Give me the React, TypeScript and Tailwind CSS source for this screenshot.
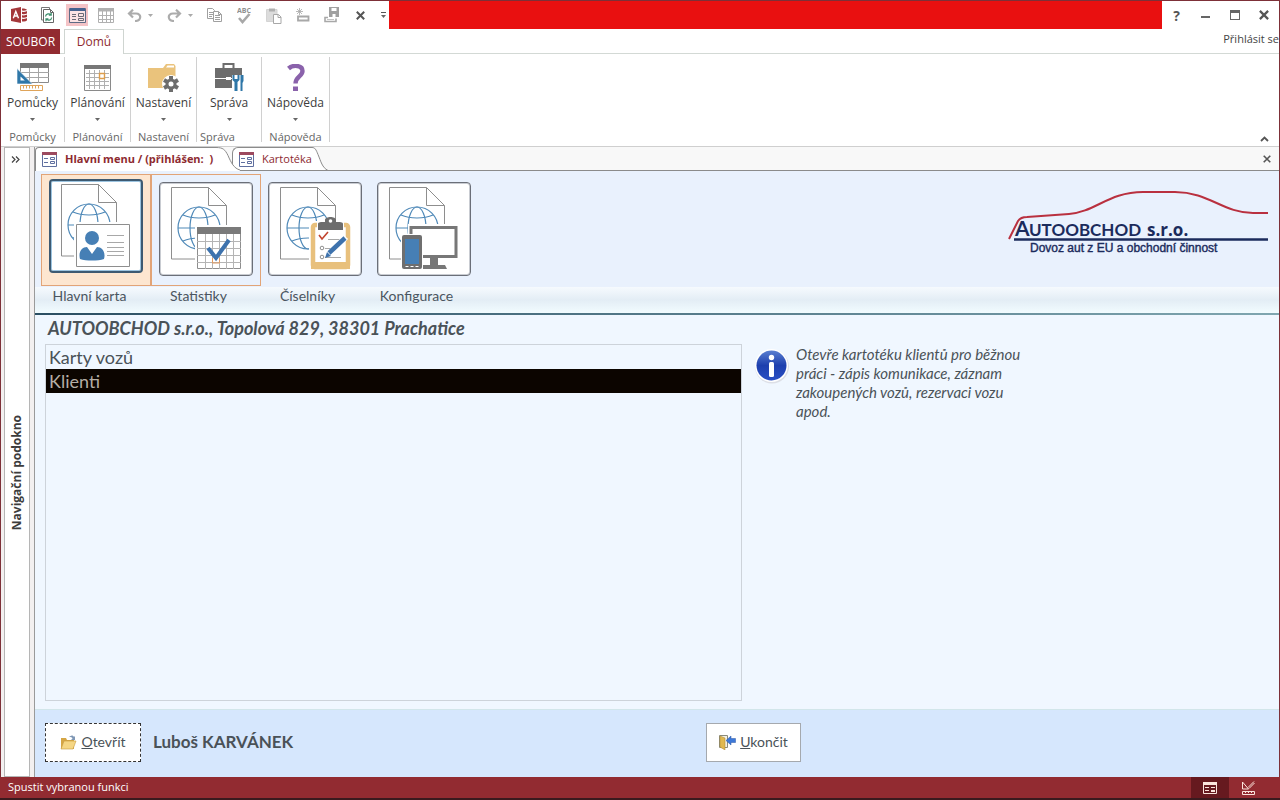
import React from "react";

const uiFont = "font-['Open_Sans','Noto_Sans',sans-serif]";
const formFont = "font-['Lato','Liberation_Sans',sans-serif]";

interface QuickAction {
  name: string;
  width: string;
  icon: React.ReactNode;
  active?: boolean;
}

const AccessLogo = () => (
  <svg width="18" height="18" viewBox="0 0 18 18">
    <path d="M1 3 11 1v16L1 15z" fill="#a4373a" />
    <path d="M12 2.500c3 0 5 .6 5 1.500v10c0 .9-2 1.600-5 1.600z" fill="#a4373a" />
    <path d="M12 5.200c2.500.3 4 0 5-.6M12 8.700c2.500.3 4 0 5-.6M12 12.200c2.500.3 4 0 5-.6" stroke="#fff" strokeWidth="1.200" fill="none" />
    <path d="m3.300 12.300 2.500-6.800 2.700 6.800M4.200 10h3.500" stroke="#fff" strokeWidth="1.400" fill="none" />
  </svg>
);

const RefreshPageIcon = () => (
  <svg width="15" height="18" viewBox="0 0 15 18" fill="none">
    <path d="M3 14H1.500V1.500h8V3" stroke="#777" />
    <path d="M3.500 3.500h7l3 3v10h-10z" stroke="#666" fill="#fff" />
    <path d="M10.500 3.500v3h3" stroke="#666" />
    <path d="M5.500 10.500c.4-3 4-3.500 5.500-1.500M11.200 6.800V9.200H8.800M11.700 11.500c-.4 3-4 3.500-5.500 1.500M6 15.200v-2.400h2.400" stroke="#3c8f6d" strokeWidth="1.200" />
  </svg>
);

const FormIcon = () => (
  <svg width="17" height="15" viewBox="0 0 17 15" fill="none">
    <path d="M.5.500h16v14H.5z" fill="#fbe3e4" stroke="#5d6b85" />
    <path d="M1 0h15v3H1z" fill="#46628f" />
    <path d="M3 6.500h4M3 8.500h4M3 11.500h4" stroke="#6b6b76" />
    <path d="M9.500 5.500h5v3h-5zM9.500 10.500h5v2h-5z" stroke="#6b6b76" />
  </svg>
);

const GridIcon = () => (
  <svg width="16" height="15" viewBox="0 0 16 15" fill="none" stroke="#b0b0b0">
    <path d="M0 0h16v3.500H0z" fill="#b0b0b0" stroke="none" />
    <path d="M.5 1v13.500h15V1M4.500 3v11M8.500 3v11M12.500 3v11M0 7.500h16M0 11.500h16" />
  </svg>
);

const UndoIcon = () => (
  <svg width="15" height="13" viewBox="0 0 15 13" fill="none" stroke="#acacac" strokeWidth="2.200">
    <path d="M2 4.500h7c6 0 5.500 7.500-1 7.500M6 .700 2 4.500l4 4" />
  </svg>
);

const RedoIcon = () => (
  <svg width="15" height="13" viewBox="0 0 15 13" fill="none" stroke="#acacac" strokeWidth="2.200">
    <path d="M13 4.500H6C0 4.500.5 12 7 12M9 .700l4 3.800-4 4" />
  </svg>
);

const Caret = ({ color = "#666" }: { color?: string }) => (
  <svg width="5" height="3" viewBox="0 0 5 3">
    <path d="M0 0h5L2.500 3z" fill={color} />
  </svg>
);

const CopyIcon = () => (
  <svg width="15" height="14" viewBox="0 0 15 14" fill="none" stroke="#a0a0a0">
    <path d="M.5.500h5l2 2v8h-7zM2 4.500h4M2 6.500h4M2 8.500h3" />
    <path d="M6.500 3.500h5l3 3v7h-8z" fill="#fff" />
    <path d="M8 7.500h5M8 9.500h5M8 11.500h5M11.500 3.500v3h3" />
  </svg>
);

const SpellingIcon = () => (
  <svg width="14" height="17" viewBox="0 0 14 17" fill="none">
    <text x="7" y="6" textAnchor="middle" fontSize="7" fontWeight="700" fill="#909090" fontFamily="Open Sans">
      ABC
    </text>
    <path d="m2 11 3.500 4 7-8" stroke="#a8a8a8" strokeWidth="2.600" />
  </svg>
);

const PasteIcon = () => (
  <svg width="16" height="17" viewBox="0 0 16 17" fill="none">
    <path d="M.5 2.500H11v12H.5z" fill="#dcdcdc" stroke="#d4d4d4" />
    <path d="M3 1.500h6v3H3z" fill="#b0b0b0" />
    <path d="M7.500 7.500h5l2.500 2.500v6.500H7.500z" fill="#fff" stroke="#a8a8a8" />
    <path d="M12 7.500v3h3" stroke="#a8a8a8" />
  </svg>
);

const NewItemIcon = () => (
  <svg width="15" height="14" viewBox="0 0 15 14" fill="none" stroke="#a8a8a8">
    <path d="M4.500 0v7M1 3.500h7M2 1l5 5M7 1 2 6" strokeWidth=".8" />
    <path d="M3 8.500h10.500v4H3z" strokeWidth="1.800" />
  </svg>
);

const SaveItemIcon = () => (
  <svg width="16" height="16" viewBox="0 0 16 16" fill="none">
    <path d="M5 0h10v10H5z" fill="#a0a0a0" />
    <path d="M7.500 1h5v3h-5zM8.500 7h3v3h-3z" fill="#fff" />
    <path d="M4 10.500H1v4h11v-3" stroke="#a8a8a8" strokeWidth="1.600" />
    <path d="M3 12.500h7" stroke="#c4c4c4" />
  </svg>
);

const CrossIcon = ({ size = 9, color = "#555", weight = 2 }: { size?: number; color?: string; weight?: number }) => (
  <svg width={size} height={size} viewBox="0 0 9 9">
    <path d="m.8.800 7.400 7.400M8.200.800.8 8.200" stroke={color} strokeWidth={weight} />
  </svg>
);

const quickActions: QuickAction[] = [
  { name: "Access", width: "w-[29px]", icon: <AccessLogo /> },
  { name: "Obnovit", width: "w-[29px]", icon: <RefreshPageIcon /> },
  { name: "Formulář", width: "w-[22px] mx-1", icon: <FormIcon />, active: true },
  { name: "Datový list", width: "w-[28px]", icon: <GridIcon /> },
  { name: "Zpět", width: "w-[40px] gap-1.5", icon: <><UndoIcon /><Caret color="#aaa" /></> },
  { name: "Znovu", width: "w-[40px] gap-1.5", icon: <><RedoIcon /><Caret color="#aaa" /></> },
  { name: "Kopírovat", width: "w-[29px]", icon: <CopyIcon /> },
  { name: "Pravopis", width: "w-[30px]", icon: <SpellingIcon /> },
  { name: "Vložit", width: "w-[29px]", icon: <PasteIcon /> },
  { name: "Nový", width: "w-[29px]", icon: <NewItemIcon /> },
  { name: "Uložit", width: "w-[29px]", icon: <SaveItemIcon /> },
  { name: "Zavřít objekt", width: "w-[28px]", icon: <CrossIcon /> },
];

const ToolsIcon = () => (
  <svg width="32" height="30" viewBox="0 0 32 30" fill="none">
    <path d="M3.500 1.500h28v18h-28z" fill="#fff" stroke="#8a8a8a" />
    <path d="M3 0h29v5H3z" fill="#777" />
    <path d="M4 9.500h28M4 14.500h28M12.500 5v15M21.500 5v15" stroke="#a5a5a5" />
    <path d="M0 5.500 15.500 21H0z" fill="#2f77a8" stroke="#fff" strokeWidth=".6" />
    <path d="M3.500 13.500 7.800 17.500H3.500z" fill="#fff" />
    <path d="M3.500 22.500h22v5h-22z" fill="#fff" stroke="#dfa45a" />
    <path d="M6.500 23v2.500M9.500 23v2.500M12.500 23v2.500M15.500 23v2.500M18.500 23v2.500M21.500 23v2.500" stroke="#dfa45a" />
  </svg>
);

const PlanIcon = () => (
  <svg width="27" height="26" viewBox="0 0 27 26" fill="none">
    <path d="M.5.500h26v25H.5z" fill="#fff" stroke="#8a8a8a" />
    <path d="M0 0h27v4H0z" fill="#777" />
    <path d="M2 8.500h23M2 12.500h23M2 16.500h23M2 20.500h23M5.500 5v19M10.500 5v19M15.500 5v19M20.500 5v19" stroke="#b0b0b0" />
    <path d="M15.500 8.500h5v5h-5z" fill="#fff" stroke="#dd9e4d" strokeWidth="1.400" />
  </svg>
);

const SettingsIcon = () => (
  <svg width="31" height="28" viewBox="0 0 31 28" fill="none">
    <path d="M0 4h15l3-4h8l1.500 2v22H0z" fill="#eac37c" />
    <path d="M18 3.500 19.500 1.500h6.500v2z" fill="#fff" />
    <circle cx="23" cy="20" r="9" fill="#fff" />
    <g stroke="#6d6d6d" strokeWidth="4">
      <path d="M23 12v16M16 16l14 8M30 16l-14 8" />
    </g>
    <circle cx="23" cy="20" r="5.500" fill="#6d6d6d" />
    <circle cx="23" cy="20" r="2.500" fill="#fff" />
  </svg>
);

const ManageIcon = () => (
  <svg width="31" height="29" viewBox="0 0 31 29" fill="none">
    <path d="M9.500 5V1h10v4" stroke="#6d6d6d" strokeWidth="2" />
    <path d="M1 5h27v20H1z" fill="#6d6d6d" />
    <path d="M0 15.500h12M17 15.500h13" stroke="#fff" />
    <path d="M12 14h5v3h-5z" fill="#fff" />
    <path d="M18 12h13v17H18z" fill="#fff" />
    <path d="M18.500 12v5l2 2v9h3v-9l2-2v-5l-2 0v4h-3v-4zM26.500 12h3v6l-1 2v8h-2z" fill="#2f77a8" />
  </svg>
);

const HelpIcon = () => (
  <svg width="20" height="28" viewBox="0 0 20 28" fill="none">
    <path d="M2.500 4.500C7 .5 16.500 1 16.500 7c0 5.500-7 5.500-7 12.500" stroke="#8a62ab" strokeWidth="4.400" />
    <path d="M7 22.500H12V27H7z" fill="#8a62ab" />
  </svg>
);

const ribbonGroups = [
  { name: "Pomůcky", width: "w-[64px]", caption: "justify-center", icon: <ToolsIcon /> },
  { name: "Plánování", width: "w-[66px]", caption: "justify-center", icon: <PlanIcon /> },
  { name: "Nastavení", width: "w-[66px]", caption: "justify-center", icon: <SettingsIcon /> },
  { name: "Správa", width: "w-[65px]", caption: "justify-start pl-[3px]", icon: <ManageIcon /> },
  { name: "Nápověda", width: "w-[68px]", caption: "justify-center", icon: <HelpIcon /> },
];

// Page with a globe, shared by all four menu tiles
const GlobePage = ({ children }: { children: React.ReactNode }) => (
  <svg width="88" height="88" viewBox="3 3 88 88" fill="none" className="shrink-0">
    <path d="M12.500 5.500h37l18 18v53.500h-55z" stroke="#8e8e8e" />
    <path d="M49.500 5.500v18h18" stroke="#8e8e8e" />
    <g stroke="#4f89b8" strokeWidth="1.200">
      <circle cx="40" cy="46" r="21" />
      <ellipse cx="40" cy="46" rx="9" ry="21" />
      <path d="M19 46h42M24 33c9 4 23 4 32 0M24 59c9-4 23-4 32 0" />
    </g>
    {children}
  </svg>
);

const cardArt = (
  <>
    <path d="M25 43h56v44H25z" fill="#fff" />
    <path d="M27.500 45.500h53v42h-53z" fill="#fff" stroke="#8e8e8e" />
    <circle cx="43" cy="59" r="7" fill="#467fb5" />
    <path d="M31 80c-2-7 2-12 7-12l5 7 5-7c5 0 9 5 7 12-6 2-18 2-24 0z" fill="#467fb5" />
    <path d="M58 56.500h17M58 63.500h17M58 68.500h17M58 72.500h17M58 76.500h17" stroke="#a8a8a8" />
  </>
);

const calendarArt = (
  <>
    <path d="M36 43h48v46H36z" fill="#fff" />
    <path d="M38.500 46.500h43v40h-43z" fill="#fff" stroke="#8e8e8e" />
    <path d="M38 45h44v7H38z" fill="#7a7a7a" />
    <path d="M46.500 52v35M53.500 52v35M60.500 52v35M67.500 52v35M74.500 52v35M38 59.500h44M38 66.500h44M38 73.500h44M38 80.500h44" stroke="#b4b4b4" />
    <path d="M53.500 76v5h7v-5" stroke="#e29a61" />
    <path d="m49 66 8 10 13-18" stroke="#3d72ad" strokeWidth="4" />
  </>
);

const clipboardArt = (
  <>
    <path d="M41 39h43v50H41z" fill="#fff" />
    <rect x="45" y="43" width="35" height="42" rx="2" fill="#fff" stroke="#e8c07c" strokeWidth="4.500" />
    <path d="M43 80h39v7H43z" fill="#e8c07c" />
    <path d="M49 38h27v10H49z" fill="#fff" />
    <path d="M50 48v-6c0-2 3-2 7-2v-2c0-4 11-4 11 0v2c4 0 7 0 7 2v6z" fill="#6d6d6d" />
    <circle cx="62.500" cy="39" r="1.800" fill="#fff" />
    <path d="m51 53 3 4 6-7" stroke="#c2452f" strokeWidth="1.600" />
    <path d="M60 57.500h13M57 66.500h9M57 75.500h16" stroke="#a8a8a8" />
    <circle cx="54" cy="66" r="1.800" stroke="#8e8e8e" />
    <circle cx="54" cy="75" r="1.800" stroke="#8e8e8e" />
    <path d="m60 73 18-18" stroke="#fff" strokeWidth="6" />
    <path d="m61 71 16-15" stroke="#3d72ad" strokeWidth="4.500" />
    <path d="m57 76 2-6 4 4z" fill="#3d72ad" />
  </>
);

const devicesArt = (
  <>
    <path d="M31 42h51v36H31z" fill="#fff" />
    <path d="M34 45.500h45v29H34z" fill="#fff" stroke="#777" strokeWidth="3" />
    <path d="M53 76h8v7h7l2 4H44l2-4h7z" fill="#777" />
    <rect x="24" y="52" width="22" height="37" fill="#fff" />
    <rect x="25" y="53" width="20" height="34" rx="2" fill="#6f6f6f" />
    <path d="M28 57h14v25H28z" fill="#467fb5" />
    <path d="M28.500 84.500h3M33.500 84.500h3M38.500 84.500h3" stroke="#fff" />
  </>
);

const menuTiles = [
  { id: "main", name: "Hlavní karta", art: cardArt },
  { id: "stats", name: "Statistiky", art: calendarArt },
  { id: "lists", name: "Číselníky", art: clipboardArt },
  { id: "config", name: "Konfigurace", art: devicesArt },
];

const tileFrames = [
  "w-[110px] border border-[#e2a477] bg-[#fde6d0] pb-3",
  "w-[110px] border border-[#e2a477] pb-2",
  "w-[108px] border border-transparent pb-2",
  "w-[109px] border border-transparent pb-2",
];

const TabFormIcon = () => (
  <svg width="15" height="15" viewBox="0 0 15 15" fill="none" className="shrink-0">
    <path d="M.5.500h14v14H.5z" fill="#fff" stroke="#5f6f9f" />
    <path d="M0 0h15v3H0z" fill="#9d4a5f" />
    <path d="M2 6.500h4M2 10.500h4" stroke="#5f6f9f" />
    <path d="M8.500 5.500h4v2h-4zM8.500 9.500h4v2h-4z" stroke="#5f6f9f" />
  </svg>
);

const CompanyLogo = () => (
  <svg width="262" height="76" viewBox="0 0 262 76" fill="none">
    <path d="M2 55 11 37c2-3 5-4 9-4l42-3c26-2 40-22 74-22h32c34 0 48 21 78 21h15" stroke="#b9303f" strokeWidth="2" />
    <path d="M7 55.500h254" stroke="#1b2b5c" strokeWidth="2.400" />
    <text x="8" y="52" fontFamily="Lato" fontWeight="700" fontSize="21" fill="#1b2b5c">A</text>
    <text x="22" y="52" fontFamily="Lato" fontWeight="700" fontSize="17" fill="#1b2b5c">UTOOBCHOD</text>
    <text x="140" y="52" fontFamily="Open Sans" fontWeight="700" fontSize="17" fill="#1b2b5c">s.r.o.</text>
    <text x="23" y="68" fontFamily="Liberation Sans" fontSize="12" fill="#1b2b5c" stroke="#1b2b5c" strokeWidth=".4">
      Dovoz aut z EU a obchodní činnost
    </text>
  </svg>
);

const InfoIcon = () => (
  <svg className="mt-[3px] shrink-0" width="36" height="36" viewBox="0 0 36 36">
    <defs>
      <linearGradient id="info" x1="0" y1="0" x2="0" y2="1">
        <stop offset="0" stopColor="#5a7fd0" />
        <stop offset=".5" stopColor="#1d3fae" />
        <stop offset="1" stopColor="#2a50c4" />
      </linearGradient>
    </defs>
    <circle cx="18" cy="18.500" r="17" fill="#dcdfe6" />
    <circle cx="17.500" cy="17.500" r="16.500" fill="#fff" />
    <circle cx="17.500" cy="17.500" r="15" fill="url(#info)" />
    <circle cx="17.500" cy="9.500" r="2.700" fill="#fff" />
    <rect x="15" y="14" width="5" height="15" rx="1.500" fill="#fff" />
  </svg>
);

const FolderIcon = () => (
  <svg width="17" height="16" viewBox="0 0 17 16">
    <path d="M1 4h5l1 2h7v9H1z" fill="#d5a645" />
    <path d="M4 7h12l-3 8H1z" fill="#f5d684" stroke="#c89b3d" strokeWidth=".6" />
    <path d="M9 3c2-2 4-2 5 0l1-1v4h-4l1.500-1.500C12 3 11 3 9 3z" fill="#7f97b5" />
  </svg>
);

const ExitIcon = () => (
  <svg width="17" height="16" viewBox="0 0 17 16">
    <path d="M.5 1.500h8v12h-8z" fill="#f4f0e2" stroke="#8a8a7a" />
    <path d="m1 2 5 2v12l-5-3z" fill="#e0b850" stroke="#a88432" strokeWidth=".5" />
    <path d="m7 6.500 5-4.500v2.500h4.500v4H12V11z" fill="#3c78d8" stroke="#2a57a5" strokeWidth=".5" />
  </svg>
);

const listItems = ["Karty vozů", "Klienti"];

const TitleBar = () => (
  <header className="flex h-[28px] items-stretch">
    <div className="flex items-center pl-[3px]">
      {quickActions.map((action) => (
        <button
          key={action.name}
          aria-label={action.name}
          className={`flex h-[22px] items-center justify-center ${action.width} ${action.active ? "bg-[#f4c3c6]" : ""}`}
        >
          {action.icon}
        </button>
      ))}
      <button aria-label="Přizpůsobit panel" className="flex w-[15px] flex-col items-center gap-0.5 pl-1">
        <span className="h-px w-[5px] bg-[#555]" />
        <Caret />
      </button>
    </div>
    <div className="flex-1 bg-[#e91010]" />
    <div className="flex items-center text-[#555]">
      <button aria-label="Nápověda aplikace" className={`w-[29px] text-[14px] font-bold ${uiFont}`}>?</button>
      <button aria-label="Minimalizovat" className="flex w-[29px] justify-center">
        <span className="mt-1 h-0.5 w-[9px] bg-[#666]" />
      </button>
      <button aria-label="Maximalizovat" className="flex w-[29px] justify-center">
        <span className="h-[10px] w-[10px] border border-t-[3px] border-[#666]" />
      </button>
      <button aria-label="Zavřít" className="flex w-[30px] justify-center">
        <CrossIcon size={10} />
      </button>
    </div>
  </header>
);

const Ribbon = () => (
  <>
    <nav className="flex h-[25px] items-stretch text-[12px]">
      <button className="w-[59px] bg-[#922b31] text-white">SOUBOR</button>
      <div className="w-1 border-b border-[#d3d9d5]" />
      <button className="w-[60px] border border-b-0 border-[#cfd5d1] text-[#8d2a30]">Domů</button>
      <div className="flex-1 border-b border-[#d3d9d5]" />
      <div className="border-b border-[#d3d9d5]">
        <a href="#prihlasit" className="block text-[11px] leading-[20px] text-[#444]">Přihlásit se</a>
      </div>
    </nav>
    <div className="flex h-[93px] items-stretch border-b border-[#cfcfcf] text-[12px] text-[#3c3c3c]">
      {ribbonGroups.map((group) => (
        <section key={group.name} className={`flex flex-col pt-[3px] pb-1 ${group.width}`}>
          <div className="flex flex-1 flex-col border-r border-[#d0d0d0]">
            <button className="flex flex-col items-center">
              <span className="flex h-[37px] items-center pt-1">{group.icon}</span>
              <span className="leading-[18px]">{group.name}</span>
              <span className="flex h-[14px] items-center"><Caret /></span>
            </button>
            <div className={`mt-auto flex h-[11px] items-center text-[11px] leading-[11px] text-[#666] ${group.caption}`}>
              {group.name}
            </div>
          </div>
        </section>
      ))}
      <button aria-label="Sbalit pás karet" className="mt-auto mb-1 ml-auto mr-2.5">
        <svg width="9" height="6" viewBox="0 0 9 6">
          <path d="m1 5 3.500-3.500L8 5" stroke="#555" strokeWidth="1.800" fill="none" />
        </svg>
      </button>
    </div>
  </>
);

const DocumentTabs = () => (
  <div className="flex h-[24px] items-end border-b border-[#8b8b8b] bg-[#f8f8f8] text-[11px] text-[#8d2a30]">
    <button className="relative z-10 -mb-px flex h-[24px] items-stretch font-bold">
      <span className="flex w-[181px] items-center gap-2 whitespace-pre rounded-tl border-t border-l border-[#8b8b8b] bg-white pl-1.5">
        <TabFormIcon />
        {"Hlavní menu / (přihlášen:  )"}
      </span>
      <svg width="24" height="24" viewBox="0 0 24 24" fill="none" className="shrink-0">
        <path d="M0 .5c7 0 9 2 12 8 3 7 6 13 12 14.500V24H0z" fill="#fff" />
        <path d="M0 .5c7 0 9 2 12 8 3 7 6 13 12 14.500" stroke="#8b8b8b" />
      </svg>
    </button>
    <button className="-mb-px -ml-2 flex h-[24px] items-stretch">
      <span className="flex items-center gap-2 rounded-l-md border-t border-b border-l border-[#8b8b8b] bg-white pl-1.5">
        <TabFormIcon />
        Kartotéka
      </span>
      <svg width="16" height="24" viewBox="0 0 16 24" fill="none" className="shrink-0">
        <path d="M0 .5c3 0 4 2 6 7 3 7 4 13 10 16H0z" fill="#fff" />
        <path d="M0 .5c3 0 4 2 6 7 3 7 4 13 10 16H0" stroke="#8b8b8b" />
      </svg>
    </button>
    <button aria-label="Zavřít kartu" className="ml-auto mr-2 self-center">
      <CrossIcon size={8} weight={1.800} />
    </button>
  </div>
);

const FormHeader = () => (
  <>
    <div className="flex h-[116px] items-start justify-between bg-[#e9f1fd] pl-[6px]">
      <div className="flex pt-[3px]">
        {menuTiles.map((tile, i) => (
          <div key={tile.id} className={`flex h-[112px] items-end justify-center ${tileFrames[i]}`}>
            <button
              aria-labelledby={`tile-${tile.id}`}
              className={`flex h-[94px] w-[94px] items-center justify-center rounded-sm border bg-white ${
                i === 0
                  ? "border-2 border-[#3d5a72] ring-1 ring-inset ring-[#9cc4e0]"
                  : "mb-px border-[#6b6f78] ring-1 ring-inset ring-[#c9ccd2]"
              }`}
            >
              <GlobePage>{tile.art}</GlobePage>
            </button>
          </div>
        ))}
      </div>
      <div className="pt-[13px] pr-[10px]">
        <CompanyLogo />
      </div>
    </div>
    <div className={`flex h-[26px] bg-linear-to-b from-[#f6fafe] via-[#e3edf5] to-[#f2fcff] text-[14px] text-[#4a5560] ${formFont}`}>
      {menuTiles.map((tile) => (
        <span key={tile.id} id={`tile-${tile.id}`} className="w-[109px] text-center leading-[18px]">
          {tile.name}
        </span>
      ))}
    </div>
    <div className="h-0.5 bg-linear-to-r from-[#2b4f63] to-[#7fa6b0]" />
  </>
);

const FormBody = () => {
  const [selected, setSelected] = React.useState("Klienti");

  return (
    <div className={`flex flex-1 flex-col bg-[#f0f7ff] px-2.5 pb-2 text-[#4a5258] ${formFont}`}>
      <h1 className="h-[29px] pl-[3px] text-[18px] leading-[26px] font-bold italic">
        AUTOOBCHOD s.r.o., Topolová 829, 38301 Prachatice
      </h1>
      <div className="flex flex-1 items-stretch gap-3">
        <div className="flex w-[697px] flex-col border border-[#cdd3da]">
          {listItems.map((item) => (
            <button
              key={item}
              onClick={() => setSelected(item)}
              className={`h-[24px] pl-[3px] text-left text-[18px] leading-[24px] ${
                selected === item ? "bg-[#0c0500] text-[#b5aea6]" : ""
              }`}
            >
              {item}
            </button>
          ))}
        </div>
        <div className="flex items-start gap-1.5 pt-px">
          <InfoIcon />
          <p className="w-[235px] text-[15px] leading-[19px] italic">
            Otevře kartotéku klientů pro běžnou práci - zápis komunikace, záznam zakoupených vozů, rezervaci vozu apod.
          </p>
        </div>
      </div>
    </div>
  );
};

const FormFooter = () => (
  <footer className={`flex h-[68px] items-center border-t border-[#d2e6ea] bg-[#d6e7fd] px-2.5 pb-0.5 text-[#4a5258] ${formFont}`}>
    <div className="flex w-[661px] items-center gap-3">
      <button className="flex h-[39px] w-[96px] items-center justify-center gap-1 border border-dashed border-[#333] bg-white pb-0.5 text-[14px]">
        <FolderIcon />
        <span><u>O</u>tevřít</span>
      </button>
      <span className="pb-0.5 text-[17px] font-bold">Luboš KARVÁNEK</span>
    </div>
    <button className="flex h-[39px] w-[95px] items-center justify-center gap-1 border border-[#a5a9ae] bg-white pb-0.5 text-[14px]">
      <ExitIcon />
      <span><u>U</u>končit</span>
    </button>
  </footer>
);

const StatusBar = () => (
  <div className="flex h-[23px] items-stretch justify-between border-b-2 border-[#3a1a1e] bg-[#922b31] text-[11px] text-white">
    <span className="pl-2 leading-[20px]">Spustit vybranou funkci</span>
    <div className="flex pr-[13px]">
      <button aria-label="Formulářové zobrazení" className="flex w-[38px] items-center justify-center bg-[#66191f]">
        <svg width="14" height="12" viewBox="0 0 14 12" fill="none" stroke="#fbe4dc">
          <path d="M.5.500h13v11H.5zM2 5.500h4M8 5.500h4M2 8.500h4M8 8.500h4" />
          <path d="M0 0h14v3H0z" fill="#fbe4dc" stroke="none" />
          <path d="M8 8h4v2H8z" fill="#fbe4dc" stroke="none" />
        </svg>
      </button>
      <button aria-label="Návrhové zobrazení" className="flex w-[38px] items-center justify-center">
        <svg width="15" height="14" viewBox="0 0 15 14" fill="none" stroke="#fbe4dc">
          <path d="M1.500 1v7h6zM7 6.500l6-6M8 7.500l5.500-5.500" />
          <path d="M1.500 10.500h12v3h-12zM4.500 11v1M7.500 11v1M10.500 11v1" />
        </svg>
      </button>
    </div>
  </div>
);

const App: React.FC = () => (
  <div className={`flex min-h-screen flex-col bg-white ${uiFont}`}>
    <div className="flex flex-1 flex-col border border-b-0 border-[#7d3038]">
      <TitleBar />
      <Ribbon />
      <div className="flex flex-1 items-stretch">
        <aside className="flex bg-[#f3f0f0] pl-[3px]">
          <div className="flex w-[26px] flex-col items-center border border-[#b5b5b5] bg-white">
            <button aria-label="Otevřít navigační podokno" className="flex h-[22px] w-full items-center justify-center pr-1">
              <svg width="9" height="7" viewBox="0 0 9 7" fill="none" stroke="#444" strokeWidth="1.200">
                <path d="m1 .500 3 3-3 3M5 .500l3 3-3 3" />
              </svg>
            </button>
            <div className="flex flex-1 items-center justify-center">
              <span className="rotate-180 text-[12px] font-bold text-[#3c3c3c] [writing-mode:vertical-rl]">
                Navigační podokno
              </span>
            </div>
          </div>
          <div className="w-[5px] border-r border-[#9a9a9a]" />
        </aside>
        <main className="flex min-w-0 flex-1 flex-col">
          <DocumentTabs />
          <FormHeader />
          <FormBody />
          <FormFooter />
        </main>
      </div>
    </div>
    <StatusBar />
  </div>
);

export default App;
